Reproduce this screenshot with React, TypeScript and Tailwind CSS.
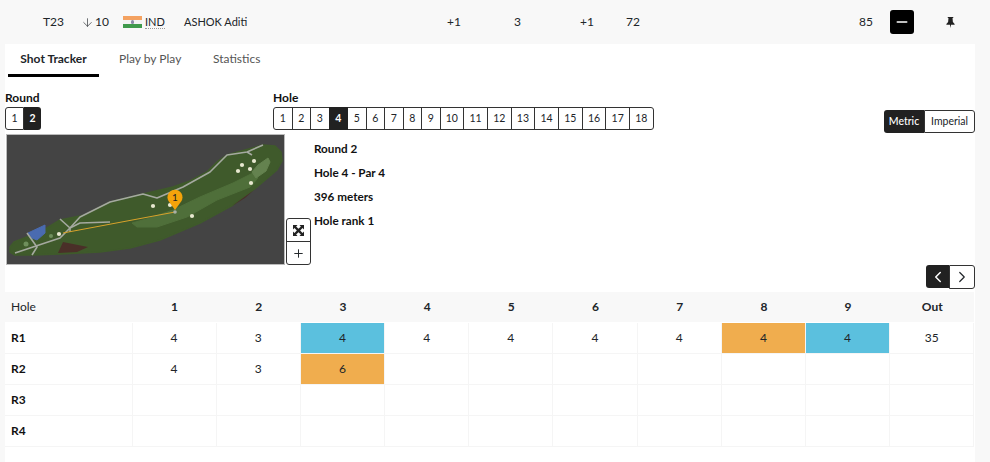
import React from "react";
import { Plus, Minus, ChevronLeft, ChevronRight, ArrowDown } from "lucide-react";

const holes = Array.from({ length: 18 }, (_, i) => i + 1);
const headers = ["1", "2", "3", "4", "5", "6", "7", "8", "9", "Out"];
const rounds = [
  { name: "R1", scores: ["4", "3", "4", "4", "4", "4", "4", "4", "4", "35"] },
  { name: "R2", scores: ["4", "3", "6", "", "", "", "", "", "", ""] },
  { name: "R3", scores: ["", "", "", "", "", "", "", "", "", ""] },
  { name: "R4", scores: ["", "", "", "", "", "", "", "", "", ""] },
];

const cellColor = (round: string, index: number) => {
  if (round === "R1" && (index === 2 || index === 8)) return "bg-[#5bc0de]";
  if (round === "R1" && index === 7) return "bg-[#f0ad4e]";
  if (round === "R2" && index === 2) return "bg-[#f0ad4e]";
  return "";
};

const CourseMap = () => (
  <svg viewBox="7 135 277 129" className="w-[277px] h-[129px] block">
    <rect x="7" y="135" width="277" height="129" fill="#444444" />
    {/* rough */}
    <path
      d="M10 247 L14 242 L27 237 L42 231 L60 220 L85 215 L110 202 L143 194 L173 187 L190 181 L207 172 L218 161 L227 155 L245 150 L263 145 L275 146 L281 152 L282 161 L277 170 L257 187 L233 205 L200 223 L160 240 L130 248 L100 252 L60 254 L33 255 L15 255 L10 252 Z"
      fill="#3f5a2b"
      stroke="#3f5a2b"
      strokeWidth="1.5"
      strokeLinejoin="round"
    />
    {/* fairway */}
    <path
      d="M132 223 L150 218 L173 210 L200 197 L233 183 L253 173 L258 178 L250 187 L217 200 L187 217 L157 227 L137 227 Z"
      fill="#4f6f3a"
      stroke="#4f6f3a"
      strokeLinejoin="round"
    />
    <path d="M252 172 L258 165 L268 158 L270 162 L266 171 L256 178 Z" fill="#64824f" stroke="#64824f" strokeLinejoin="round" />
    <path d="M28 233 L45 225 L45 233 L37 240 L32 238 Z" fill="#4a6bb0" stroke="#4a6bb0" strokeLinejoin="round" />
    <path d="M63 242 L88 247 L77 252 L58 253 Z" fill="#4a2f28" />
    <path d="M232 206 L254 190 L245 198 Z" fill="#4a2f28" />
    {/* cart paths */}
    <path
      d="M15 253 L33 247 L60 238 L70 228 L80 217 L110 202 L143 194 L157 198 L183 187 L210 172 L227 155 L247 152 L263 145"
      fill="none"
      stroke="#a5a9a0"
      strokeWidth="1.6"
      strokeLinejoin="round"
    />
    <path d="M60 219 L70 228 L70 232 M70 228 L80 223 L110 222 M27 233 L37 247 L32 255 M247 152 L252 155" fill="none" stroke="#a5a9a0" strokeWidth="1.6" strokeLinejoin="round" />
    <line x1="63" y1="233" x2="175" y2="212" stroke="#d8a22a" strokeWidth="1" />
    {[
      [242, 165],
      [254, 161],
      [238, 171],
      [250, 169],
      [251, 183],
      [153, 206],
      [170, 205],
      [192, 216],
      [59, 234],
    ].map(([x, y]) => (
      <circle key={`${x}-${y}`} cx={x} cy={y} r="2.1" fill="#e8e8d0" />
    ))}
    <circle cx="51" cy="236" r="2" fill="#6f8f5c" />
    <circle cx="26" cy="244" r="2.5" fill="#6f8f5c" />
    <circle cx="175" cy="212" r="1.8" fill="#a9b0a6" />
    <path d="M175 210 L168.5 201 A7.5 7.5 0 1 1 181.5 201 Z" fill="#f5a30a" />
    <text x="175" y="201" textAnchor="middle" fontSize="10" fill="#222222" fontFamily="Lato, sans-serif">
      1
    </text>
  </svg>
);

export default function App() {
  return (
    <div className="w-[990px] h-[462px] overflow-hidden bg-[#f8f8f8] text-[#212529] text-[12px] font-['Lato',sans-serif]">
      {/* player row */}
      <div className="h-[44px] flex items-center">
        <span className="w-[43px]" />
        <span className="w-[38px]">T23</span>
        <span className="w-[42px] flex items-center gap-[1px]">
          <ArrowDown size={13} strokeWidth={1.2} />
          10
        </span>
        <span className="w-[61px] flex items-center gap-[3px]">
          <span className="relative w-[19px] h-[12px] flex flex-col">
            <span className="h-1/3 bg-[#f4a261]" />
            <span className="h-1/3 bg-[#f3f3f3]" />
            <span className="h-1/3 bg-[#3f9a4c]" />
            <span className="absolute left-[8px] top-[4px] w-[3px] h-[4px] rounded-full bg-[#8a8aa8]" />
          </span>
          <span className="border-b border-dotted border-[#999999] leading-[13px] text-[11px]">IND</span>
        </span>
        <span className="w-[263px] text-[11px]">ASHOK Aditi</span>
        <span className="w-[67px]">+1</span>
        <span className="w-[66px]">3</span>
        <span className="w-[46px]">+1</span>
        <span className="w-[233px]">72</span>
        <span className="w-[31px]">85</span>
        <span className="w-[24px] h-[24px] rounded-[3px] bg-black flex items-center justify-center text-white">
          <Minus size={16} strokeWidth={2.5} />
        </span>
        <svg viewBox="0 0 12 12" className="ml-[31px] w-[11px] h-[11px]" fill="#222222">
          <path d="M3 0h6v1.2H8.2L8.6 5.5 10.5 7.5V8.5H6.6L6 12 5.4 8.5H1.5V7.5L3.4 5.5 3.8 1.2H3z" />
        </svg>
      </div>

      <div className="ml-[5px] w-[970px] h-[418px] bg-white">
        {/* tabs */}
        <div className="flex h-[33px] pl-[3px]">
          <span className="w-[91px] border-b-[3px] border-black font-bold text-center leading-[29px]">Shot Tracker</span>
          <span className="ml-[20px] w-[94px] leading-[29px] text-[#555555]">Play by Play</span>
          <span className="leading-[29px] text-[#555555]">Statistics</span>
        </div>

        {/* round and hole pickers */}
        <div className="flex mt-[13px] h-[43px]">
          <div className="w-[268px]">
            <div className="font-bold leading-[15px] h-[17px] text-[#111111]">Round</div>
            <div className="flex h-[23px] text-[10.5px]">
              <span className="w-[19px] border border-[#333333] rounded-l-[3px] flex items-center justify-center">1</span>
              <span className="w-[17px] bg-[#212121] text-white font-bold rounded-r-[3px] flex items-center justify-center">2</span>
            </div>
          </div>
          <div className="w-[611px]">
            <div className="font-bold leading-[15px] h-[17px] text-[#111111]">Hole</div>
            <div className="flex h-[23px] text-[10.5px]">
              {holes.map((h) => (
                <span
                  key={h}
                  className={
                    h === 4
                      ? "relative w-[19.5px] -ml-px bg-[#212121] text-white font-bold flex items-center justify-center"
                      : `${h < 10 ? "w-[19.5px]" : "w-[24.7px]"} border border-[#333333] -ml-px first:ml-0 first:rounded-l-[3px] last:rounded-r-[3px] flex items-center justify-center`
                  }
                >
                  {h}
                </span>
              ))}
            </div>
          </div>
          <div className="flex self-end h-[23px] text-[10.5px]">
            <span className="w-[40px] bg-[#212121] text-white font-medium rounded-l-[3px] flex items-center justify-center">Metric</span>
            <span className="w-[51px] border border-[#333333] rounded-r-[3px] flex items-center justify-center">Imperial</span>
          </div>
        </div>

        {/* map and hole info */}
        <div className="flex mt-[1px] h-[131px]">
          <div className="ml-[1px] border border-[#bbbbbb] w-[279px] h-[131px]">
            <CourseMap />
          </div>
          <div className="ml-[1px] self-end flex flex-col w-[25px] h-[47px] border border-[#333333] rounded-[3px] bg-white">
            <span className="h-[23px] border-b border-[#333333] flex items-center justify-center">
              <svg viewBox="0 0 12 12" className="w-[11px] h-[11px]" fill="#222222">
                <path d="M0 0h5L3.4 1.6 6 4.2 8.6 1.6 7 0h5v5l-1.6-1.6L7.8 6l2.6 2.6L12 7v5H7l1.6-1.6L6 7.8l-2.6 2.6L5 12H0V7l1.6 1.6L4.2 6 1.6 3.4 0 5z" />
              </svg>
            </span>
            <span className="flex-1 flex items-center justify-center">
              <Plus size={13} strokeWidth={1.8} />
            </span>
          </div>
          <div className="ml-[3px] pt-[2px] font-bold text-[11.7px] text-[#111111] leading-[24px]">
            <div>Round 2</div>
            <div>Hole 4 - Par 4</div>
            <div>396 meters</div>
            <div>Hole rank 1</div>
          </div>
        </div>

        {/* prev and next */}
        <div className="flex justify-end h-[24px]">
          <span className="w-[23px] h-[23px] bg-[#212121] text-white rounded-l-[3px] flex items-center justify-center">
            <ChevronLeft size={18} strokeWidth={2} />
          </span>
          <span className="w-[26px] h-[24px] border border-[#333333] rounded-r-[3px] flex items-center justify-center">
            <ChevronRight size={18} strokeWidth={1.6} />
          </span>
        </div>

        {/* scorecard */}
        <div className="mt-[3px] w-[969.5px] grid grid-cols-[127.5px_repeat(10,84.2px)] auto-rows-[31px]">
          <div className="bg-[#f8f8f8] h-[30px] pl-[6px] flex items-center">Hole</div>
          {headers.map((h) => (
            <div key={h} className="bg-[#f8f8f8] h-[30px] flex items-center justify-center font-bold">
              {h}
            </div>
          ))}
          {rounds.map((r) => (
            <React.Fragment key={r.name}>
              <div className="pl-[6px] flex items-center font-bold text-[#111111] border-b border-r border-[#f5f5f5]">{r.name}</div>
              {r.scores.map((s, i) => (
                <div key={i} className="flex items-center justify-center border-b border-r border-[#f5f5f5]">
                  <span className={`w-full h-full flex items-center justify-center ${cellColor(r.name, i)}`}>{s}</span>
                </div>
              ))}
            </React.Fragment>
          ))}
        </div>
      </div>
    </div>
  );
}
